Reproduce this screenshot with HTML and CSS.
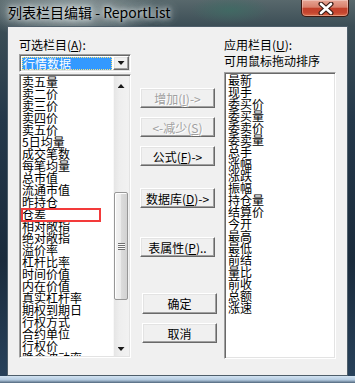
FILE: index.html
```html
<!DOCTYPE html>
<html>
<head>
    <meta charset="utf-8">
    <title>列表栏目编辑 - ReportList</title>
    <link rel="stylesheet" href="styles.css">
</head>
<body>
    <div class="window">
        <div class="titlebar">
            <span class="title">列表栏目编辑 - ReportList</span>
            <div class="close-btn">
                <svg width="18" height="13" viewBox="0 0 18 13">
                    <path d="M4 2 L14 11 M14 2 L4 11" stroke="#3a1c16" stroke-width="5" stroke-linecap="round"/>
                    <path d="M4 2 L14 11 M14 2 L4 11" stroke="#fff" stroke-width="2.6" stroke-linecap="round"/>
                </svg>
            </div>
        </div>

        <div class="client">
            <!-- 可选栏目 -->
            <div class="col-left">
                <div class="label">可选栏目(<u>A</u>):</div>
                <div class="combo">
                    <div class="combo-value">行情数据</div>
                    <div class="combo-btn"><i class="arrow arrow-down"></i></div>
                </div>
                <div class="listbox listbox-left">
                    <ul class="items">
                        <li>卖五量</li>
                        <li>卖二价</li>
                        <li>卖三价</li>
                        <li>卖四价</li>
                        <li>卖五价</li>
                        <li>5日均量</li>
                        <li>成交笔数</li>
                        <li>每笔均量</li>
                        <li>总市值</li>
                        <li>流通市值</li>
                        <li>昨持仓</li>
                        <li class="marked">仓差<span class="mark"></span></li>
                        <li>相对敞指</li>
                        <li>绝对敞指</li>
                        <li>溢价率</li>
                        <li>杠杆比率</li>
                        <li>时间价值</li>
                        <li>内在价值</li>
                        <li>真实杠杆率</li>
                        <li>期权到期日</li>
                        <li>行权方式</li>
                        <li>合约单位</li>
                        <li>行权价</li>
                        <li>隐含波动率</li>
                    </ul>
                    <div class="vscroll">
                        <div class="sb-arrow"><i class="arrow arrow-up"></i></div>
                        <div class="sb-track">
                            <div class="sb-thumb"><i class="grip"></i></div>
                        </div>
                        <div class="sb-arrow"><i class="arrow arrow-down"></i></div>
                    </div>
                </div>
            </div>

            <!-- 按钮 -->
            <div class="col-mid">
                <button class="btn btn-add" disabled>增加(<u>I</u>)-&gt;</button>
                <button class="btn btn-gap" disabled>&lt;-减少(<u>S</u>)</button>
                <button class="btn btn-gap">公式(<u>F</u>)-&gt;</button>
                <button class="btn btn-db">数据库(<u>D</u>)-&gt;</button>
                <button class="btn btn-prop">表属性(<u>P</u>)..</button>
                <button class="btn btn-ok">确定</button>
                <button class="btn btn-cancel">取消</button>
            </div>

            <!-- 应用栏目 -->
            <div class="col-right">
                <div class="label">应用栏目(<u>U</u>):</div>
                <div class="label">可用鼠标拖动排序</div>
                <div class="listbox listbox-right">
                    <ul class="items">
                        <li>最新</li>
                        <li>现手</li>
                        <li>委买价</li>
                        <li>委买量</li>
                        <li>委卖价</li>
                        <li>委卖量</li>
                        <li>总手</li>
                        <li>涨幅</li>
                        <li>涨跌</li>
                        <li>振幅</li>
                        <li>持仓量</li>
                        <li>结算价</li>
                        <li>今开</li>
                        <li>最高</li>
                        <li>最低</li>
                        <li>前结</li>
                        <li>量比</li>
                        <li>前收</li>
                        <li>总额</li>
                        <li>涨速</li>
                    </ul>
                </div>
            </div>
        </div>

        <div class="bottom-frame"></div>
    </div>
</body>
</html>
```

FILE: styles.css
```css
/* 窗口框架 */
body {
    margin: 0;
    font-family: "Noto Sans CJK SC", sans-serif;
}

.window {
    width: 355px;
    height: 383px;
    background:
        radial-gradient(ellipse 90px 30px at 70px 12px, #9aa6a8 0%, rgba(120,135,138,0) 100%),
        radial-gradient(ellipse 40px 14px at 230px 10px, rgba(60,110,100,.7) 0%, rgba(40,70,70,0) 100%),
        linear-gradient(to bottom, #58686c 0px, #3c4e56 26px, #24384a 120px, #1a2b3c 260px, #28425c 383px);
    overflow: hidden;
}

.titlebar {
    height: 26px;
    display: flex;
    justify-content: space-between;
    align-items: flex-start;
}

.title {
    padding: 4px 0 0 8px;
    font-size: 14px;
    line-height: 16px;
    color: #000;
    text-shadow: 0 0 4px #dfe5e6, 0 0 8px rgba(220,228,230,.9), 0 0 12px rgba(220,228,230,.7);
}

.close-btn {
    width: 48px;
    height: 17px;
    margin-right: 6px;
    box-sizing: border-box;
    border: 1px solid #3e1810;
    border-top: none;
    border-radius: 0 0 5px 5px;
    background: linear-gradient(to bottom, #e6a595 0%, #d8806c 45%, #c2402a 52%, #c64630 80%, #dc6d48 100%);
    box-shadow: inset 0 0 0 1px rgba(255,255,255,.3);
    display: flex;
    justify-content: center;
    align-items: center;
}

.close-btn svg {
    margin-left: 2px;
}

.client {
    height: 350px;
    margin: 0 7px;
    box-sizing: border-box;
    border: 1px solid #4e5e6a;
    background-color: #f0f0f0;
    display: flex;
    padding: 10px 11px 0 11px;
    font-size: 12px;
    color: #000;
}

.bottom-frame {
    height: 7px;
    background: linear-gradient(to bottom, #d3e3f2 0%, #b4cbe0 55%, #50667c 100%);
}

/* 列 */
.col-left {
    width: 112px;
}

.col-mid {
    width: 77px;
    margin-left: 9px;
}

.col-right {
    width: 112px;
    margin-left: 7px;
}

.label {
    line-height: 16px;
    white-space: nowrap;
}

/* 下拉框 */
.combo {
    height: 18px;
    margin-top: 1px;
    box-sizing: border-box;
    background: #fff;
    border: 1px solid;
    border-color: #a0a0a0 #fff #fff #a0a0a0;
    box-shadow: inset 1px 1px #696969, inset -1px -1px #e3e3e3;
    padding: 1px;
    display: flex;
}

.combo-value {
    flex: 1;
    height: 13px;
    margin: 1px 1px 0 1px;
    padding-left: 1px;
    background-color: #3399ff;
    color: #fff;
    line-height: 13px;
    outline: 1px dotted #f6e27a;
    outline-offset: -1px;
}

.combo-btn {
    width: 16px;
    height: 14px;
    box-sizing: border-box;
    background: #f0f0f0;
    border: 1px solid;
    border-color: #fff #696969 #696969 #fff;
    box-shadow: inset -1px -1px #a0a0a0, inset 1px 1px #e3e3e3;
    display: flex;
    justify-content: center;
    align-items: center;
}

.arrow {
    display: block;
    width: 7px;
    height: 4px;
    background: #1a1a1a;
}

.arrow-down {
    clip-path: polygon(0 0, 100% 0, 50% 100%);
}

.arrow-up {
    clip-path: polygon(50% 0, 100% 100%, 0 100%);
}

/* 列表框 */
.listbox {
    box-sizing: border-box;
    background: #fff;
    border: 1px solid;
    border-color: #a0a0a0 #fff #fff #a0a0a0;
    box-shadow: inset 1px 1px #696969, inset -1px -1px #e3e3e3;
    padding: 1px;
    display: flex;
    overflow: hidden;
}

.listbox-left {
    height: 284px;
    margin-top: 2px;
}

.listbox-right {
    height: 287px;
    margin-top: 3px;
}

.items {
    flex: 1;
    margin: 0;
    padding: 0 0 0 1px;
    list-style: none;
    line-height: 12px;
    white-space: nowrap;
    overflow: hidden;
}

.listbox-right .items {
    padding-left: 2px;
}

.items li {
    height: 12px;
}

.marked {
    position: relative;
}

.mark {
    position: absolute;
    left: -1px;
    top: 0;
    width: 80px;
    height: 14px;
    box-sizing: border-box;
    border: 2px solid #f33a3a;
}

/* 滚动条 */
.vscroll {
    width: 16px;
    display: flex;
    flex-direction: column;
    background: linear-gradient(to right, #e4e4e4 0%, #eeeeee 40%, #f2f2f2 100%);
    box-shadow: inset 1px 0 #f8f8f8;
}

.sb-arrow {
    height: 17px;
    display: flex;
    justify-content: center;
    align-items: center;
    padding-top: 3px;
    box-sizing: border-box;
}

.sb-track {
    flex: 1;
}

.sb-thumb {
    margin: 99px 1px 0 1px;
    height: 108px;
    box-sizing: border-box;
    border: 1px solid #979797;
    border-radius: 2px;
    background: linear-gradient(to right, #f3f3f3 0%, #ebebeb 50%, #dcdcdc 51%, #d2d2d2 100%);
    box-shadow: inset 1px 1px #fff;
    display: flex;
    justify-content: center;
    align-items: center;
}

.grip {
    display: block;
    width: 7px;
    height: 7px;
    background: repeating-linear-gradient(to bottom, #707070 0, #707070 1px, #fafafa 1px, #fafafa 2px);
}

/* 按钮 */
.btn {
    display: block;
    width: 75px;
    height: 20px;
    padding: 0;
    box-sizing: border-box;
    background-color: #f0f0f0;
    border: 1px solid;
    border-color: #fff #696969 #696969 #fff;
    box-shadow: inset -1px -1px #a0a0a0, inset 1px 1px #e3e3e3;
    font-family: "Noto Sans CJK SC", sans-serif;
    font-size: 12px;
    line-height: 17px;
    color: #000;
    text-align: center;
    white-space: nowrap;
}

.btn:disabled {
    color: #a0a0a0;
    text-shadow: 1px 1px #fff;
}

.btn-add {
    margin-top: 51px;
}

.btn-gap {
    margin-top: 9px;
}

.btn-db {
    margin-top: 22px;
}

.btn-prop {
    margin-top: 29px;
}

.btn-ok {
    margin-top: 36px;
    margin-left: 2px;
    height: 21px;
}

.btn-cancel {
    margin-top: 9px;
    margin-left: 2px;
}
```
